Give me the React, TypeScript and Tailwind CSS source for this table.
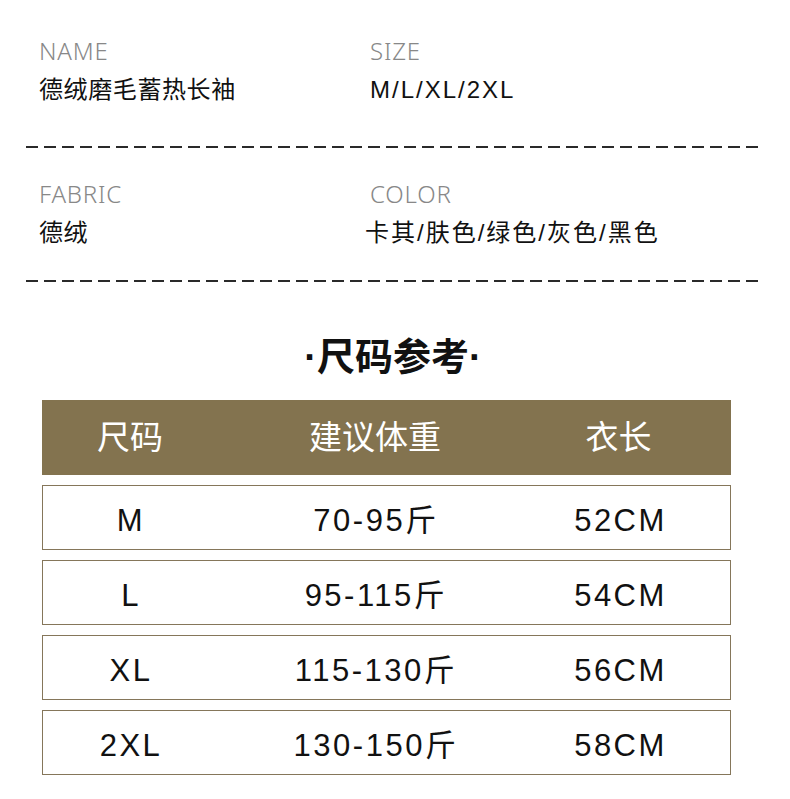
const font = { fontFamily: '"Liberation Sans", "Noto Sans CJK SC", sans-serif' };

const specs = [
  [
    { label: 'NAME', value: '德绒磨毛蓄热长袖', track: 'tracking-[0.6px]' },
    { label: 'SIZE', value: 'M/L/XL/2XL', track: 'tracking-[2px]' },
  ],
  [
    { label: 'FABRIC', value: '德绒', track: 'tracking-[0.6px]' },
    { label: 'COLOR', value: '卡其/肤色/绿色/灰色/黑色', track: 'tracking-[2px]' },
  ],
];

const rows = [
  ['M', '70-95斤', '52CM'],
  ['L', '95-115斤', '54CM'],
  ['XL', '115-130斤', '56CM'],
  ['2XL', '130-150斤', '58CM'],
];

function Dashes() {
  return (
    <div className="ml-[26px] mr-[30px] h-[2px] bg-[repeating-linear-gradient(to_right,#2a2a2a_0_12px,transparent_12px_18px)]" />
  );
}

export default function App() {
  return (
    <div className="w-[790px] h-[799px] bg-white overflow-hidden" style={font}>
      {specs.map((pair, i) => (
        <div key={i}>
          <div className={`grid grid-cols-[331px_1fr] pl-[39px] ${i === 0 ? 'pt-[37px] pb-[41px]' : 'pt-[32px] pb-[32px]'}`}>
            {pair.map((s) => (
              <div key={s.label}>
                <div
                  className="text-[24px] leading-[28px] text-[#888] font-light tracking-[0.8px]"
                  style={{ fontFamily: '"Noto Sans", "Liberation Sans", sans-serif' }}
                >
                  {s.label}
                </div>
                <div className={`mt-[10px] text-[24px] leading-[30px] text-[#111] ${s.track} ${s.label === 'COLOR' ? '-ml-[5px]' : ''}`}>
                  {s.value}
                </div>
              </div>
            ))}
          </div>
          <Dashes />
        </div>
      ))}

      <div className="mt-[53px] text-center text-[38px] leading-[44px] font-bold text-[#111] pr-[4px]">
        ·尺码参考·
      </div>

      <div className="mx-[42px] mt-[21px] w-[689px]">
        <div className="grid grid-cols-[176px_314px_1fr] items-center h-[75px] bg-[#83734f] text-white text-[33px]">
          <div className="text-center">尺码</div>
          <div className="text-center">建议体重</div>
          <div className="text-center pr-[26px]">衣长</div>
        </div>
        <div className="flex flex-col gap-[10px] mt-[10px]">
          {rows.map((r) => (
            <div
              key={r[0]}
              className="grid grid-cols-[176px_314px_1fr] items-center h-[65px] pt-[8px] border border-[#85765a] text-[31px] tracking-[2.5px] text-[#111]"
            >
              <div className="text-center">{r[0]}</div>
              <div className="text-center">{r[1]}</div>
              <div className="text-center pr-[22px]">{r[2]}</div>
            </div>
          ))}
        </div>
      </div>
    </div>
  );
}
